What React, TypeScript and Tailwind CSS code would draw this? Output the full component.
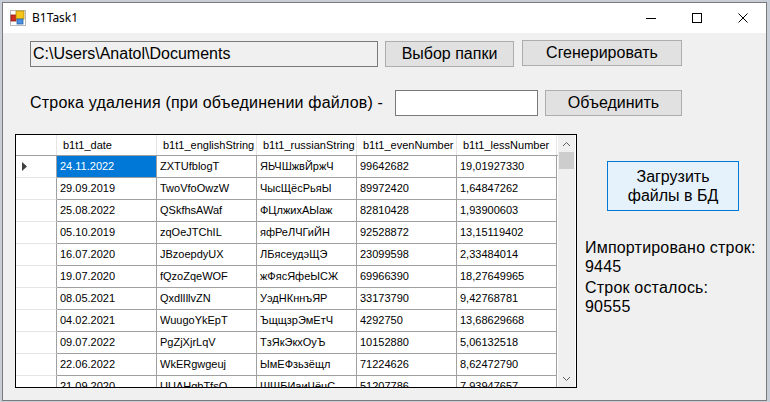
const rows: string[][] = [
  ["24.11.2022", "ZXTUfblogT", "ЯЬЧШжвЙржЧ", "99642682", "19,01927330"],
  ["29.09.2019", "TwoVfoOwzW", "ЧысЩёсРьяЫ", "89972420", "1,64847262"],
  ["25.08.2022", "QSkfhsAWaf", "ФЦлжихАЫаж", "82810428", "1,93900603"],
  ["05.10.2019", "zqOeJTChIL", "яфРеЛЧГиЙН", "92528872", "13,15119402"],
  ["16.07.2020", "JBzoepdyUX", "ЛБясеудэЩЭ", "23099598", "2,33484014"],
  ["19.07.2020", "fQzoZqeWOF", "жФясЯфеЫСЖ", "69966390", "18,27649965"],
  ["08.05.2021", "QxdlIllvZN", "УэдНКннъЯР", "33173790", "9,42768781"],
  ["04.02.2021", "WuugoYkEpT", "ЪщщзрЭмЕтЧ", "4292750", "13,68629668"],
  ["09.07.2022", "PgZjXjrLqV", "ТзЯкЭкхОуЪ", "10152880", "5,06132518"],
  ["22.06.2022", "WkERgwgeuj", "ЫмЕФзьзёщл", "71224626", "8,62472790"],
  ["21.09.2020", "UUAHgbTfsO", "ШШБИаиЧёцС", "51207786", "7,93947657"],
];

const columns = ["b1t1_date", "b1t1_englishString", "b1t1_russianString", "b1t1_evenNumber", "b1t1_lessNumber"];

const sans = "font-['Liberation_Sans',Arial,sans-serif]";

function AppIcon() {
  return (
    <svg width="16" height="16" viewBox="0 0 16 16">
      <rect x="0.5" y="0.5" width="15" height="15" fill="none" stroke="#b8b8b8" />
      <rect x="1" y="5" width="5" height="6" fill="#d42a20" stroke="#8a1a14" strokeWidth="0.8" />
      <rect x="6" y="1" width="8" height="8" fill="#f5c518" stroke="#b88a00" strokeWidth="0.8" />
      <rect x="7" y="9" width="6" height="5" fill="#4a90e2" stroke="#2a64a8" strokeWidth="0.8" />
    </svg>
  );
}

function TitleBar() {
  return (
    <div className="flex h-[30px] items-center bg-white">
      <div className="ml-[7px] flex h-[16px] w-[16px] items-center">
        <AppIcon />
      </div>
      <span className="ml-[6px] text-[12px] text-black font-['Segoe_UI','Noto_Sans',sans-serif]">B1Task1</span>
      <div className="ml-auto flex h-full">
        <div className="flex w-[46px] items-center justify-center">
          <div className="h-px w-[10px] bg-black" />
        </div>
        <div className="flex w-[46px] items-center justify-center">
          <div className="h-[10px] w-[10px] border border-black" />
        </div>
        <div className="flex w-[46px] items-center justify-center">
          <svg width="10" height="10" viewBox="0 0 10 10">
            <path d="M0.5 0.5 L9.5 9.5 M9.5 0.5 L0.5 9.5" stroke="#000" strokeWidth="1" />
          </svg>
        </div>
      </div>
    </div>
  );
}

function WinButton({ label, className }: { label: string; className: string }) {
  return (
    <div className={`flex h-[26px] shrink-0 items-center justify-center border border-[#adadad] bg-[#e1e1e1] text-[16px] text-black ${className}`}>
      {label}
    </div>
  );
}

function Chevron({ up }: { up: boolean }) {
  return (
    <svg width="9" height="6" viewBox="0 0 9 6">
      <polyline
        points={up ? "1,5 4.5,1.5 8,5" : "1,1 4.5,4.5 8,1"}
        fill="none"
        stroke="#606060"
        strokeWidth="1"
      />
    </svg>
  );
}

function Grid() {
  return (
    <div className={`flex h-[254px] w-[562px] border border-black bg-white ${sans}`}>
      <div className="flex w-[542px] flex-col overflow-hidden">
        <div className="flex h-[21px] shrink-0 border-b border-[#a0a0a0] bg-white">
          <div className="w-[41px] shrink-0 border-r border-[#e5e5e5]" />
          {columns.map((c) => (
            <div
              key={c}
              className="flex w-[100px] shrink-0 items-center border-r border-[#e5e5e5] pl-[6px] text-[11px] text-black"
            >
              {c}
            </div>
          ))}
        </div>
        {rows.map((r, i) => (
          <div key={i} className="flex h-[22px] shrink-0">
            <div className="flex w-[41px] shrink-0 items-center border-r border-b border-r-[#a0a0a0] border-b-[#e5e5e5] pl-[6px]">
              {i === 0 && (
                <svg width="5" height="9" viewBox="0 0 5 9">
                  <polygon points="0,0 5,4.5 0,9" fill="#404040" />
                </svg>
              )}
            </div>
            {r.map((v, j) => (
              <div
                key={j}
                className={`flex w-[100px] shrink-0 items-center border-r border-b border-[#a0a0a0] pl-[3px] text-[11px] ${
                  i === 0 && j === 0 ? "bg-[#0078d7] text-white" : "text-black"
                }`}
              >
                {v}
              </div>
            ))}
          </div>
        ))}
      </div>
      <div className="flex w-[17px] flex-col bg-[#f0f0f0]">
        <div className="flex h-[17px] items-center justify-center">
          <Chevron up />
        </div>
        <div className="mx-[1px] h-[17px] bg-[#cdcdcd]" />
        <div className="flex-1" />
        <div className="flex h-[17px] items-center justify-center">
          <Chevron up={false} />
        </div>
      </div>
    </div>
  );
}

export default function App() {
  return (
    <div className="h-[402px] w-[770px] overflow-hidden bg-[#c8ced8] pl-[2px] pt-[2px]">
      <div className="flex h-[399px] w-[765px] flex-col border border-[#7a7a7a]">
        <TitleBar />
        <div className={`flex flex-1 flex-col bg-[#f0f0f0] text-black ${sans}`}>
          <div className="ml-[27px] mt-[8px] flex items-start">
            <div className="flex h-[26px] w-[348px] items-center border border-[#7a7a7a] bg-[#f0f0f0] pl-[2px] text-[16px]">
              {"C:\\Users\\Anatol\\Documents"}
            </div>
            <WinButton label="Выбор папки" className="ml-[7px] w-[129px]" />
            <WinButton label="Сгенерировать" className="ml-[8px] -mt-px w-[160px]" />
          </div>
          <div className="ml-[27px] mt-[23px] flex items-center">
            <span className="w-[365px] shrink-0 whitespace-nowrap text-[16px] tracking-[0.2px]">
              Строка удаления (при объединении файлов) -
            </span>
            <div className="h-[26px] w-[143px] shrink-0 border border-[#7a7a7a] bg-white" />
            <WinButton label="Объединить" className="ml-[7px] w-[137px]" />
          </div>
          <div className="ml-[12px] mt-[18px] flex">
            <Grid />
            <div className="ml-[8px] flex flex-col">
              <div className="ml-[22px] mt-[27px] flex h-[50px] w-[132px] flex-col items-center justify-center border border-[#0078d7] bg-[#e5f1fb] text-[16px] leading-[19px]">
                <span>Загрузить</span>
                <span>файлы в БД</span>
              </div>
              <div className="mt-[27px] whitespace-nowrap text-[16px] leading-[19px] tracking-[0.2px]">
                <div>Импортировано строк:</div>
                <div>9445</div>
              </div>
              <div className="mt-[2px] text-[16px] leading-[19px] tracking-[0.2px]">
                <div>Строк осталось:</div>
                <div>90555</div>
              </div>
            </div>
          </div>
        </div>
      </div>
    </div>
  );
}
